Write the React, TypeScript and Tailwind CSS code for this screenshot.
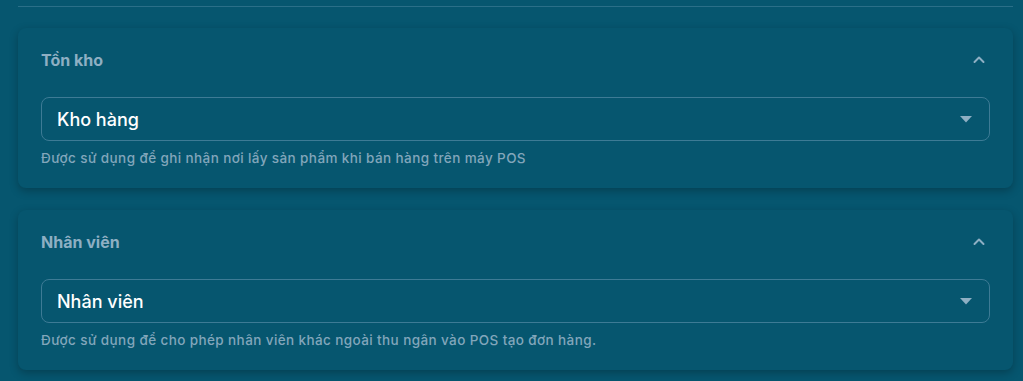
import React from "react";

function Card({ title, value, help }: { title: string; value: string; help: string }) {
  return (
    <div className="rounded-lg bg-[#06566f] px-[23px] pt-[22px] pb-[22px] shadow-[0_3px_8px_rgba(0,0,0,0.25)]">
      <div className="flex items-center justify-between h-5">
        <span className="text-[16px] font-bold text-[#8eafc3]">{title}</span>
        <svg width="14" height="14" viewBox="0 0 14 14" className="mr-[4px]">
          <path d="M2.5 9 L7 4.5 L11.5 9" fill="none" stroke="#8eafc3" strokeWidth="2" strokeLinecap="round" strokeLinejoin="round" />
        </svg>
      </div>
      <div className="mt-[27px] flex h-[44px] items-center justify-between rounded-[8px] border border-[#3d7b95] pl-[15px] pr-[17px]">
        <span className="pt-[1px] text-[18px] font-medium text-white">{value}</span>
        <svg width="12" height="7" viewBox="0 0 12 7">
          <path d="M0 0 H12 L6 6.5 Z" fill="#8eafc3" />
        </svg>
      </div>
      <div className="mt-[9px] h-4 text-[13.5px] leading-4 font-medium tracking-[0.4px] text-[#82a6bb]">{help}</div>
    </div>
  );
}

export default function App() {
  return (
    <div className="min-h-[381px] w-[1023px] bg-[#06566f] pt-[6px] pl-[18px] pr-[10px]" style={{ fontFamily: "Inter, 'Noto Sans', sans-serif" }}>
      <div className="h-px bg-[#2a6f88]" />
      <div className="mt-[21px] flex flex-col gap-[22px]">
        <Card title="Tồn kho" value="Kho hàng" help="Được sử dụng để ghi nhận nơi lấy sản phẩm khi bán hàng trên máy POS" />
        <Card title="Nhân viên" value="Nhân viên" help="Được sử dụng để cho phép nhân viên khác ngoài thu ngân vào POS tạo đơn hàng." />
      </div>
    </div>
  );
}
